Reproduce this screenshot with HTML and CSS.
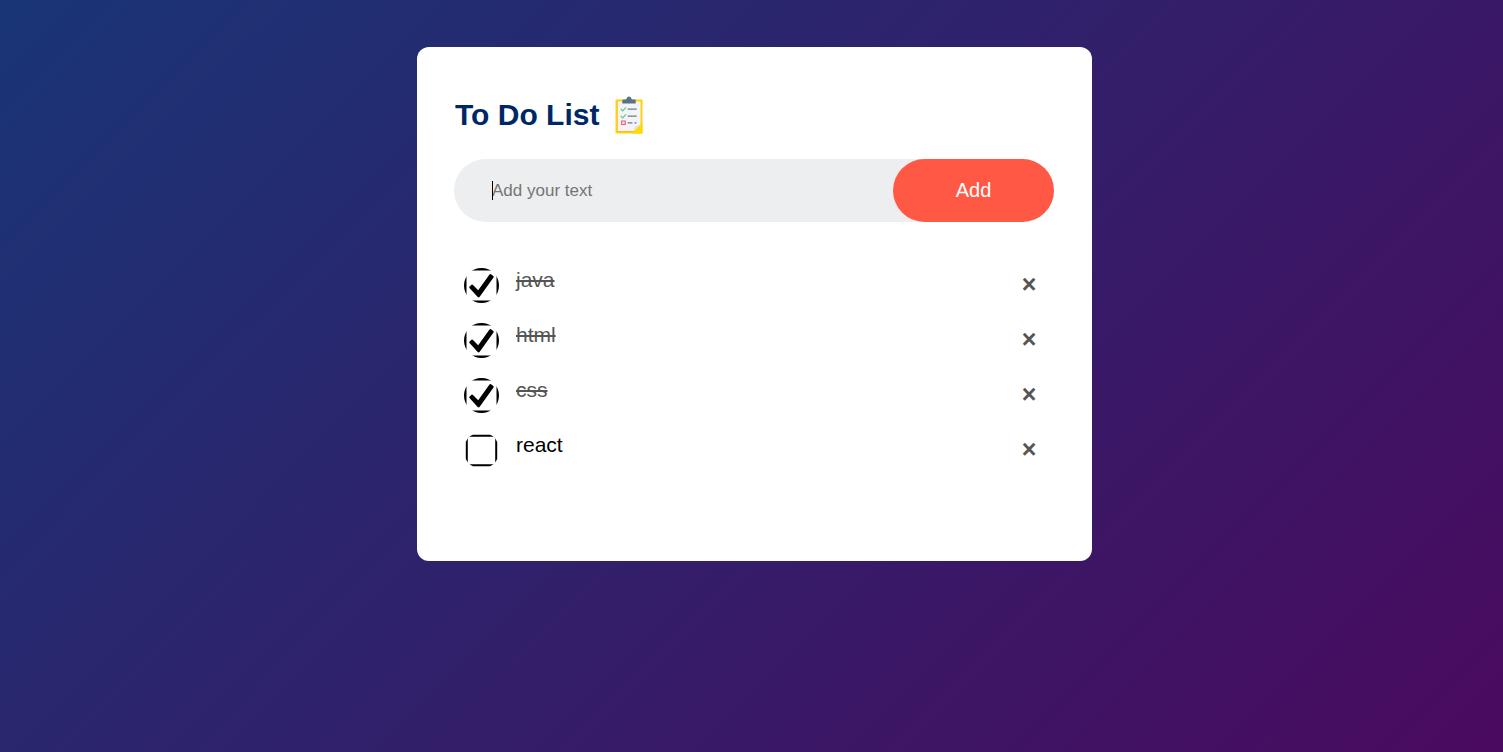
FILE: index.html
```html
<!DOCTYPE html>
<html lang="en">
<head>
<meta charset="utf-8">
<meta name="viewport" content="width=device-width, initial-scale=1">
<title>To Do List</title>
<link rel="stylesheet" href="styles.css">
</head>
<body>
<svg class="sprite" aria-hidden="true">
  <symbol id="checked" viewBox="0 0 35 35">
    <clipPath id="round"><circle cx="17.5" cy="17.5" r="17.5"/></clipPath>
    <path clip-path="url(#round)" fill-rule="evenodd" d="M0 0H35V35H0ZM5.500 2.500Q2.500 2.500 2.500 5.500V29.500Q2.500 32.500 5.500 32.500H29.500Q32.500 32.500 32.500 29.500V5.500Q32.500 2.500 29.500 2.500Z"/>
    <path d="M5.300 19.700Q5 19 5.600 18.400L7.500 16.700Q8.300 16.200 9 16.900L14.200 22.300L25.300 6.700Q26 5.800 27 6.300L29.300 8Q30.100 8.700 29.500 9.600L15.700 28.800Q14.800 29.900 13.700 28.900Z"/>
  </symbol>
  <symbol id="unchecked" viewBox="0 0 35 35">
    <clipPath id="soft"><path d="M9 1.800H26Q30.500 3 33.200 9V26Q31 31 26 33.200H9Q4 31 1.800 26V9Q4 3.500 9 1.800Z"/></clipPath>
    <path clip-path="url(#soft)" fill-rule="evenodd" d="M1 1H34V34H1ZM6 3.800Q3.800 3.800 3.800 6V29Q3.800 31.200 6 31.200H29Q31.200 31.200 31.200 29V6Q31.200 3.800 29 3.800Z"/>
  </symbol>
</svg>
<main class="card">
  <h1 class="title">To Do List
    <svg class="clipboard" viewBox="0 0 28 38" aria-hidden="true">
      <path fill="#ffd20a" d="M1.500 3.500H26.500Q27.500 3.500 27.500 4.500V37.500H1.500Q.500 37.500 .500 36.500V4.500Q.500 3.500 1.500 3.500Z"/>
      <path fill="#ffb52c" d="M2.300 6V36H17.500L19.500 34.500H3V6Z"/>
      <path fill="#f4f4f6" d="M2.800 5.500H25.500V28.500L19 35H2.800Z"/>
      <path fill="#dedee2" d="M25.500 28.500L18.500 35L20.500 30.500Z"/>
      <path fill="#ffda00" d="M27.500 27.500V37.500H17L26 29.500Z"/>
      <path fill="#557486" d="M7.300 4.500Q7.300 3.500 8.300 3.500H10.500Q11.800 3.200 11.800 2Q12 .500 14 .500T16.200 2Q16.200 3.200 17.500 3.500H19.700Q20.700 3.500 20.700 4.500V7.500H7.300Z"/>
      <path d="M5.700 13L7.700 15L11 11.300M5.700 20L7.700 22L11 18.300" fill="none" stroke="#5dcc91" stroke-width="1.200"/>
      <path d="M12.700 13.200H21.700M12.700 20.200H21.700M12.700 26.800H17.500M19.500 26.800H21.500" stroke="#637f90" stroke-width="1.200"/>
      <path d="M6.700 25H10.200V28.500H6.700Z" fill="none" stroke="#f95b70" stroke-width="1.200"/>
    </svg>
  </h1>
  <form class="entry">
    <span class="field">
      <input class="entry-text" type="text" placeholder="Add your text" aria-label="New task">
      <span class="caret"></span>
    </span>
    <button class="add" type="button">Add</button>
  </form>
  <ul class="tasks">
    <li class="task"><label class="task-label"><input class="tick" type="checkbox" checked><svg class="mark mark-on"><use href="#checked"/></svg><svg class="mark mark-off"><use href="#unchecked"/></svg><span class="task-name">java</span></label><button class="remove" type="button" aria-label="Remove java">×</button></li>
    <li class="task"><label class="task-label"><input class="tick" type="checkbox" checked><svg class="mark mark-on"><use href="#checked"/></svg><svg class="mark mark-off"><use href="#unchecked"/></svg><span class="task-name">html</span></label><button class="remove" type="button" aria-label="Remove html">×</button></li>
    <li class="task"><label class="task-label"><input class="tick" type="checkbox" checked><svg class="mark mark-on"><use href="#checked"/></svg><svg class="mark mark-off"><use href="#unchecked"/></svg><span class="task-name">css</span></label><button class="remove" type="button" aria-label="Remove css">×</button></li>
    <li class="task"><label class="task-label"><input class="tick" type="checkbox"><svg class="mark mark-on"><use href="#checked"/></svg><svg class="mark mark-off"><use href="#unchecked"/></svg><span class="task-name">react</span></label><button class="remove" type="button" aria-label="Remove react">×</button></li>
  </ul>
</main>
</body>
</html>
```

FILE: styles.css
```css
* {
  box-sizing: border-box;
  margin: 0;
  padding: 0;
  font-family: "Liberation Sans", Arial, sans-serif;
}

body {
  min-height: 100vh;
  padding: 47px 0 47px 6px;
  background: linear-gradient(135deg, #193576, #4a0a5f);
}

.sprite {
  position: absolute;
  width: 0;
  height: 0;
}

.card {
  width: 100%;
  max-width: 675px;
  margin: 0 auto;
  padding: 49px 38px 83px 37px;
  background: #fff;
  border-radius: 12px;
}

.title {
  display: flex;
  align-items: center;
  gap: 16px;
  padding-left: 1px;
  margin-bottom: 25px;
  color: #002765;
  font-size: 30px;
  line-height: 38px;
}

.clipboard {
  width: 28px;
  height: 38px;
}

.entry {
  display: flex;
  height: 63px;
  margin-bottom: 36px;
  background: #edeef0;
  border-radius: 32px;
}

.field {
  position: relative;
  flex: 1;
  display: flex;
  min-width: 0;
}

.entry-text {
  width: 100%;
  padding-left: 38px;
  border: 0;
  outline: 0;
  background: transparent;
  font-size: 17px;
}

.entry-text::placeholder {
  color: #757575;
}

.caret {
  position: absolute;
  top: 22px;
  left: 38px;
  width: 1px;
  height: 19px;
  background: #000;
}

.add {
  width: 161px;
  border: 0;
  border-radius: 32px;
  background: #ff5945;
  color: #fff;
  font-size: 20px;
}

.tasks {
  list-style: none;
}

.task {
  display: flex;
  height: 55px;
  padding: 10px 0 10px 10px;
}

.task-label {
  flex: 1;
  display: flex;
  gap: 17px;
}

.tick {
  position: absolute;
  opacity: 0;
}

.mark {
  width: 35px;
  height: 35px;
}

.tick:checked ~ .mark-off,
.tick:not(:checked) ~ .mark-on {
  display: none;
}

.task-name {
  font-size: 21px;
  line-height: 24px;
  color: #000;
}

.tick:checked ~ .task-name {
  color: #555;
  text-decoration: line-through;
}

.remove {
  width: 50px;
  height: 32px;
  border: 0;
  background: transparent;
  color: #555;
  font-size: 25px;
  font-weight: bold;
  line-height: 32px;
}
```
